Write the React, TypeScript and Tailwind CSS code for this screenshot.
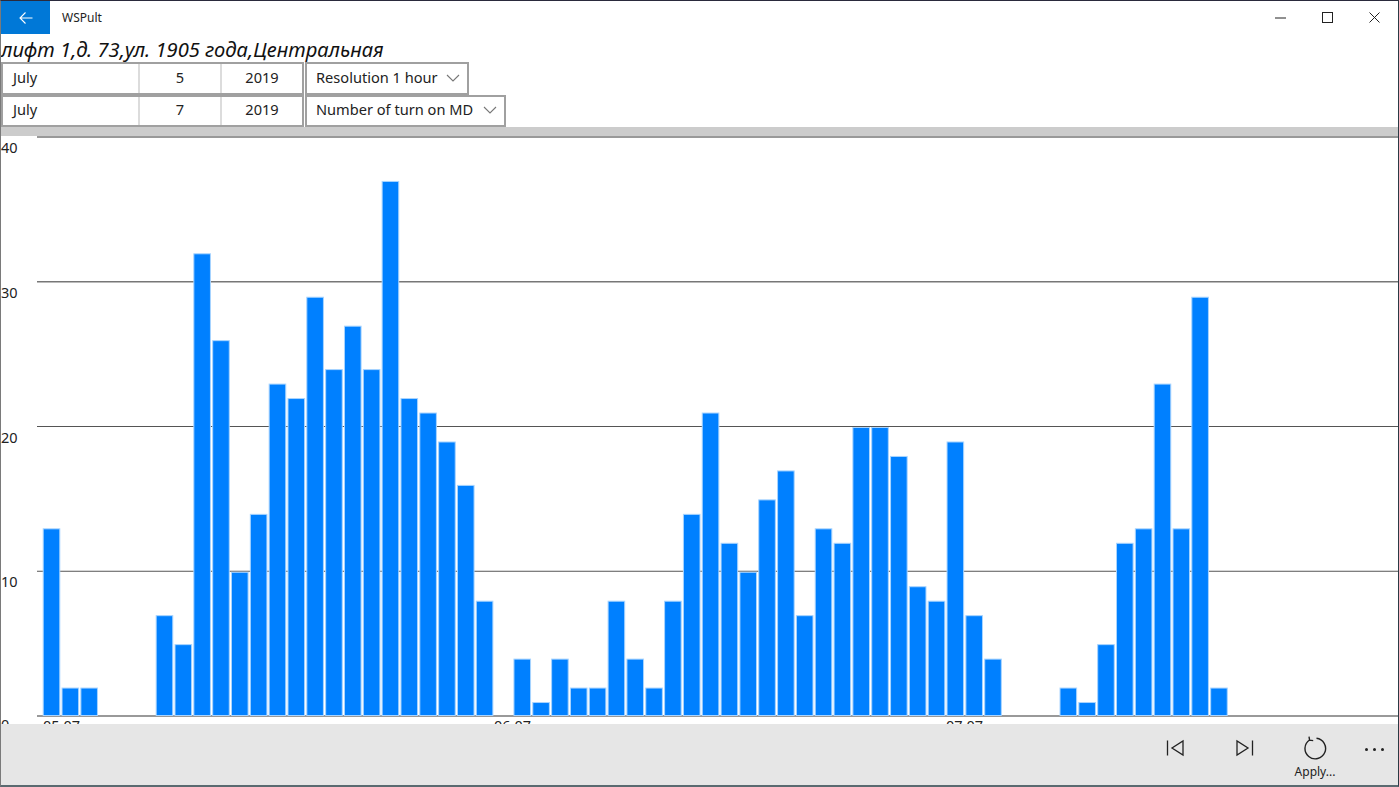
import React from "react";

const values = [13,2,2,0,0,0,7,5,32,26,10,14,23,22,29,24,27,24,37,22,21,19,16,8,0,4,1,4,2,2,8,4,2,8,14,21,12,10,15,17,7,13,12,20,20,18,9,8,19,7,4,0,0,0,2,1,5,12,13,23,13,29,2];
const base = 580;
const unit = 14.475;
const step = 18.83;

function Chevron() {
  return (
    <svg width="14" height="8" viewBox="0 0 14 8" fill="none" stroke="#777" strokeWidth="1.1">
      <path d="M1 1l6 6 6-6" />
    </svg>
  );
}

function DateRow({ day, combo, comboW, rowH }: { day: string; combo: string; comboW: string; rowH: string }) {
  return (
    <div className={"flex shrink-0 " + rowH}>
      <div className="flex h-full w-[303px] border-2 border-[#a0a0a0] text-[14.6px] text-[#222]">
        <div className="flex items-center w-[137px] pl-[10px] pb-[2px] border-r-2 border-r-[#dcdcdc]">July</div>
        <div className="flex items-center justify-center w-[82px] pb-[2px] border-r-2 border-r-[#dcdcdc]">{day}</div>
        <div className="flex items-center justify-center flex-1 pb-[2px]">2019</div>
      </div>
      <div className={"flex items-center justify-between h-full ml-px pl-[9px] pr-[7px] pb-[2px] border-2 border-[#a0a0a0] text-[14.6px] text-[#222] " + comboW}>
        <span>{combo}</span>
        <Chevron />
      </div>
    </div>
  );
}

function Command({ children, label, className }: { children: React.ReactNode; label?: string; className: string }) {
  return (
    <div className={"flex flex-col items-center h-full " + className}>
      {children}
      {label && <span className="text-[12px] leading-[14px] mt-[5px] text-[#222]">{label}</span>}
    </div>
  );
}

export default function App() {
  return (
    <div
      className="w-[1399px] h-[787px] flex flex-col overflow-hidden bg-white border-t border-t-[#2a2a3c] border-l border-l-[#7a7a7a] border-r border-r-[#2a3a44] border-b-2 border-b-[#5a6a70]"
      style={{ fontFamily: '"Noto Sans", "Open Sans", sans-serif' }}
    >
      <header className="flex items-center h-[33px] shrink-0">
        <div className="flex items-center justify-center w-[49px] h-full bg-[#0078d7]">
          <svg width="14" height="14" viewBox="0 0 14 14" fill="none" stroke="#fff" strokeWidth="1.1">
            <path d="M13.5 7H1M6.5 1.5 1 7l5.5 5.5" />
          </svg>
        </div>
        <span className="ml-3 text-[12px] text-[#222]">WSPult</span>
        <div className="ml-auto flex items-center h-full">
          <div className="flex items-center justify-center w-[47px] h-full">
            <svg width="11" height="11" viewBox="0 0 11 11" stroke="#222" strokeWidth="1"><path d="M0 6h11" /></svg>
          </div>
          <div className="flex items-center justify-center w-[47px] h-full">
            <svg width="11" height="11" viewBox="0 0 11 11" fill="none" stroke="#222" strokeWidth="1"><rect x=".5" y=".5" width="10" height="10" /></svg>
          </div>
          <div className="flex items-center justify-center w-[47px] h-full">
            <svg width="11" height="11" viewBox="0 0 11 11" fill="none" stroke="#222" strokeWidth="1"><path d="M.5.5l10 10M10.5.5l-10 10" /></svg>
          </div>
        </div>
      </header>

      <h1 className="h-[28px] shrink-0 pt-[2px] text-[20.15px] leading-[26px] italic font-normal text-[#111] whitespace-nowrap">
        лифт 1,д. 73,ул. 1905 года,Центральная
      </h1>

      <DateRow day="5" combo="Resolution 1 hour" comboW="w-[164px]" rowH="h-[33px]" />
      <DateRow day="7" combo="Number of turn on MD" comboW="w-[201px]" rowH="h-[32px]" />

      <div className="h-[9px] shrink-0 bg-[#cccccc]" />

      <main className="flex-1 min-h-0 overflow-hidden">
        <svg width="1397" height="600" className="block" style={{ fontFamily: '"Noto Sans", sans-serif' }}>
          {[0, 10, 20, 30, 40].map((v) => {
            const y = base - v * unit;
            return (
              <g key={v}>
                <line x1="36" x2="1397" y1={y} y2={y} stroke={v === 10 || v === 20 ? "#555" : "#777"} strokeWidth={v === 10 || v === 20 ? 1 : 1.6} />
                <text x="0" y={v === 0 ? y + 14 : y + 16} fontSize="14.5" fill="#222">{v}</text>
              </g>
            );
          })}
          {values.map((v, i) =>
            v > 0 ? (
              <rect key={i} x={42.2 + i * step} y={base - v * unit + 1} width="16.6" height={v * unit - 1.5} fill="#0080ff" stroke="#a8d4ff" strokeWidth="1" />
            ) : null
          )}
          {[["05.07", 42], ["06.07", 493], ["07.07", 945]].map(([t, x]) => (
            <text key={t as string} x={x as number} y={base + 15} fontSize="14.5" fill="#222">{t}</text>
          ))}
        </svg>
      </main>

      <footer className="flex justify-end h-[61px] shrink-0 bg-[#e6e6e6]">
        <Command className="w-[70px] pt-[14px]">
          <svg width="20" height="20" viewBox="0 0 20 20" fill="none" stroke="#222" strokeWidth="1.3"><path d="M2.5 2.5v15M18 3v14L7 10z" /></svg>
        </Command>
        <Command className="w-[70px] pt-[14px]">
          <svg width="20" height="20" viewBox="0 0 20 20" fill="none" stroke="#222" strokeWidth="1.3"><path d="M17.5 2.5v15M2 3v14l11-7z" /></svg>
        </Command>
        <Command className="w-[70px] pt-[12px]" label="Apply...">
          <svg width="24" height="24" viewBox="0 0 24 24" fill="none" stroke="#222" strokeWidth="1.4"><path d="M6.5 4A10.3 10.3 0 1 0 13.5 2.3M6 .6l.6 3.6 3.6.4" /></svg>
        </Command>
        <div className="flex items-start justify-center w-[48px] pt-[24px] gap-[5px]">
          <span className="w-[3px] h-[3px] bg-[#222] rounded-full" />
          <span className="w-[3px] h-[3px] bg-[#222] rounded-full" />
          <span className="w-[3px] h-[3px] bg-[#222] rounded-full" />
        </div>
      </footer>
    </div>
  );
}
